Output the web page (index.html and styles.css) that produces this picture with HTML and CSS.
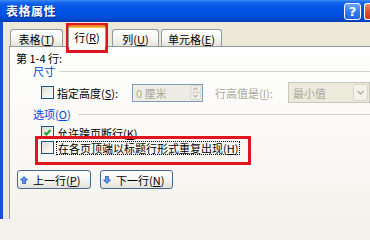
FILE: index.html
```html
<!DOCTYPE html>
<html lang="zh-CN">
<head>
<meta charset="utf-8">
<title>表格属性</title>
<link rel="stylesheet" href="styles.css">
</head>
<body>
<div class="window">
  <div class="titlebar">
    <span class="title">表格属性</span>
    <div class="tb-buttons">
      <span class="tb-btn help">?</span>
      <span class="tb-btn close"></span>
    </div>
  </div>
  <div class="client">
    <div class="tabs">
      <div class="tab t1">表格(<u>T</u>)</div>
      <div class="tab sel">行(<u>R</u>)</div>
      <div class="tab t3">列(<u>U</u>)</div>
      <div class="tab t4">单元格(<u>E</u>)</div>
    </div>
    <div class="panel">
      <div class="rows-label">第 1-4 行:</div>
      <div class="legend size-legend"><span>尺寸</span><i class="rule"></i></div>
      <div class="size-row">
        <label class="check size-check"><span class="box"></span>指定高度(<u>S</u>):</label>
        <div class="input">
          <span>0 厘米</span>
          <svg class="spin" width="11" height="15" viewBox="0 0 11 15">
            <rect x="0.5" y="0.5" width="10" height="6.5" rx="1.5" fill="#F2F1EA" stroke="#D8D5C6"/>
            <rect x="0.5" y="8" width="10" height="6.5" rx="1.5" fill="#F2F1EA" stroke="#D8D5C6"/>
            <path d="M3.5 4.8 L5.5 2.8 L7.5 4.8" fill="none" stroke="#B5B2A4" stroke-width="1.2"/>
            <path d="M3.5 10 L5.5 12 L7.5 10" fill="none" stroke="#B5B2A4" stroke-width="1.2"/>
          </svg>
        </div>
        <span class="dis-lbl">行高值是(<u>I</u>):</span>
        <div class="select">
          <span>最小值</span>
          <svg class="drop" width="15" height="17" viewBox="0 0 15 17">
            <rect x="0.5" y="0.5" width="14" height="16" rx="1.5" fill="#F2F1EA" stroke="#D8D5C6"/>
            <path d="M4.5 7 L7.5 10 L10.5 7" fill="none" stroke="#B5B2A4" stroke-width="1.5"/>
          </svg>
        </div>
      </div>
      <div class="legend opts-legend"><span>选项(<u>O</u>)</span><i class="rule"></i></div>
      <label class="check opt first">
        <span class="box checked">
          <svg width="11" height="11" viewBox="0 0 11 11"><path d="M2.5 5.5 L4.5 7.5 L8.5 3" fill="none" stroke="#21A121" stroke-width="2"/></svg>
        </span>允许跨页断行(<u>K</u>)
      </label>
      <label class="check opt">
        <span class="box"></span><span class="focus">在各页顶端以标题行形式重复出现(<u>H</u>)</span>
      </label>
      <div class="nav">
        <button class="btn" type="button">
          <svg class="arrow" width="8" height="8" viewBox="0 0 8 8"><path d="M4 0.5 L7.5 4 L5.5 4 L5.5 7.5 L2.5 7.5 L2.5 4 L0.5 4 Z" fill="#5C98F2" stroke="#2254B8" stroke-width="0.8" stroke-linejoin="round"/></svg>
          <span>上一行(<u>P</u>)</span>
        </button>
        <button class="btn btn2" type="button">
          <svg class="arrow" width="8" height="8" viewBox="0 0 8 8"><path d="M4 7.5 L7.5 4 L5.5 4 L5.5 0.5 L2.5 0.5 L2.5 4 L0.5 4 Z" fill="#5C98F2" stroke="#2254B8" stroke-width="0.8" stroke-linejoin="round"/></svg>
          <span>下一行(<u>N</u>)</span>
        </button>
      </div>
    </div>
  </div>
  <div class="mark mark-tab"></div>
  <div class="mark mark-row"></div>
</div>
</body>
</html>
```
FILE: styles.css
```css
* { box-sizing: border-box; }
html { margin: 0; padding: 0; background: #F3F2EC; }
body {
  margin: 0;
  padding: 0;
  width: 370px;
  height: 219px;
  overflow: hidden;
  background: #ECE9D8;
  font-family: "Noto Sans CJK SC", "Noto Sans", sans-serif;
  font-size: 11px;
  color: #000;
}
u { text-decoration: underline; }
.window { position: relative; width: 370px; height: 219px; overflow: hidden; }

.titlebar {
  height: 22px;
  display: flex;
  align-items: center;
  padding-left: 6px;
  background: linear-gradient(to bottom, #3D8FF5 0px, #1B6CF0 2px, #0A5BE6 5px, #0055E5 10px, #0050DC 16px, #0046C8 20px, #003BB0 22px);
}
.title {
  color: #fff;
  font-weight: bold;
  font-size: 12px;
  letter-spacing: 0.5px;
  line-height: 14px;
  text-shadow: 1px 1px 0 #0A2A90;
}
.tb-buttons { margin-left: auto; display: flex; gap: 3px; }
.tb-btn {
  width: 17px;
  height: 17px;
  border: 1px solid #fff;
  border-radius: 3px;
  display: flex;
  align-items: center;
  justify-content: center;
}
.help {
  background: linear-gradient(#6AA6FF, #3477EE 55%, #2462DC);
  color: #fff;
  font: bold 13px "DejaVu Sans", sans-serif;
}
.close {
  width: 6px;
  border-right: none;
  border-radius: 3px 0 0 3px;
  background: linear-gradient(#EC8A6A, #DA4D2D 55%, #C63A1E);
}

.client { border-left: 3px solid #1A4ED6; height: 197px; display: flex; flex-direction: column; }

.tabs {
  display: flex;
  align-items: flex-end;
  padding: 3px 0 0 7px;
  height: 25px;
  flex: none;
  margin-bottom: -1px;
  position: relative;
  z-index: 2;
}
.tab {
  height: 17px;
  margin-bottom: 1px;
  border: 1px solid #919B9C;
  border-bottom: none;
  border-radius: 3px 3px 0 0;
  background: linear-gradient(#FFFFFF, #F4F4F0 60%, #E4E3DB);
  padding-top: 3px;
  line-height: 12px;
  text-align: center;
  white-space: nowrap;
}
.t1 { width: 53px; }
.sel {
  width: 38px;
  height: 22px;
  margin-left: 5px;
  margin-bottom: 0;
  border-top: 2px solid #E68B2C;
  box-shadow: inset 0 1px 0 #FFC73C;
  background: #FDFDFD;
  padding-top: 4px;
}
.t3 { width: 47px; margin-left: 6px; }
.t4 { width: 61px; margin-left: 2px; }

.panel {
  flex: 1;
  margin-left: 6px;
  border: 1px solid #919B9C;
  border-right: none;
  border-bottom: none;
  background: linear-gradient(#FEFEFE, #F8F7F3 70%, #F3F2EC);
  padding-top: 5px;
}
.rows-label { padding-left: 6px; line-height: 12px; }
.legend {
  display: flex;
  align-items: center;
  padding-left: 23px;
  line-height: 12px;
  color: #0046D5;
}
.size-legend { margin-top: 1px; }
.legend .rule { flex: 1; height: 1px; background: #D6D4C6; margin-left: 4px; }
.opts-legend { margin-top: 5px; }
.opts-legend .rule { margin-left: 7px; }

.size-row {
  display: flex;
  align-items: center;
  height: 21px;
  margin-top: 5px;
  padding-left: 31px;
}
.check { display: flex; align-items: center; }
.size-check { width: 91px; }
.box {
  width: 13px;
  height: 13px;
  flex: none;
  border: 1px solid #1C5180;
  background: linear-gradient(135deg, #DCDCD6, #FFFFFF);
  margin-right: 3px;
  display: flex;
  align-items: center;
  justify-content: center;
}
.input {
  width: 71px;
  height: 18px;
  border: 1px solid #7F9DB9;
  background: #EEEDE5;
  display: flex;
  align-items: center;
  padding-left: 3px;
  color: #ACA899;
}
.spin { margin-left: auto; margin-right: 1px; }
.dis-lbl { margin-left: 12px; width: 73px; color: #ACA899; white-space: nowrap; }
.select {
  width: 82px;
  height: 21px;
  border: 1px solid #C9C7BA;
  background: #EBEADB;
  display: flex;
  align-items: center;
  padding-left: 4px;
  color: #ACA899;
}
.drop { margin-left: auto; margin-right: 1px; }

.opt { height: 15px; padding-left: 31px; }
.opt.first { margin-top: 5px; }
.focus { border: 1px dotted #000; padding: 0 1px; line-height: 12px; margin-left: -1px; }

.nav { display: flex; gap: 9px; padding-left: 7px; margin-top: 15px; }
.btn {
  width: 74px;
  height: 19px;
  margin: 0;
  border: 1px solid #4A6690;
  border-radius: 3px;
  background: linear-gradient(#FFFFFF, #F5F5F1 50%, #E2E1D9);
  display: flex;
  align-items: center;
  padding: 0 0 0 2px;
  font: 11px "Noto Sans CJK SC", "Noto Sans", sans-serif;
  color: #000;
}
.btn2 { width: 73px; }
.arrow { margin-right: 5px; flex: none; }

.mark { position: absolute; border: 3px solid #E0161E; }
.mark-tab { left: 66px; top: 23px; width: 42px; height: 30px; }
.mark-row { left: 35px; top: 136px; width: 216px; height: 29px; }
```
